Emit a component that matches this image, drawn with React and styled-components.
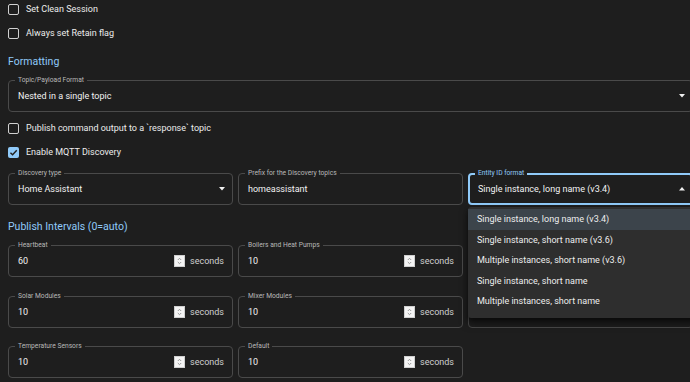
import React from 'react';
import styled, { createGlobalStyle } from 'styled-components';

const Global = createGlobalStyle`
  html, body { margin: 0; padding: 0; background: #1e1e1e; overflow: hidden; }
  body { font-family: Roboto, "Noto Sans", sans-serif; color: #ffffff; }
`;

const Page = styled.div`
  width: 685px;
  padding: 0 8px;
  display: flex;
  flex-direction: column;
`;

const CheckRow = styled.label`
  display: flex;
  align-items: center;
  gap: 7px;
  height: 24px;
  margin-top: ${p => p.$mt || 0}px;
  font-size: 9px;
  color: #ececec;
`;

const Box = styled.span`
  width: 11px;
  height: 11px;
  flex-shrink: 0;
  box-sizing: border-box;
  border-radius: 2px;
  border: ${p => (p.$checked ? 'none' : '1.6px solid #d0d0d0')};
  background: ${p => (p.$checked ? '#90caf9' : 'transparent')};
  display: flex;
  align-items: center;
  justify-content: center;
`;

const Heading = styled.div`
  font-size: 10.5px;
  line-height: 20px;
  color: #90caf9;
  margin-top: ${p => p.$mt || 0}px;
`;

const Field = styled.div`
  position: relative;
  height: 32px;
  box-sizing: border-box;
  border: ${p => (p.$focus ? '2px solid #90caf9' : '1px solid #4a4a4a')};
  border-radius: 4px;
  display: flex;
  align-items: center;
  padding: 0 ${p => (p.$focus ? 6 : 7)}px 0 ${p => (p.$focus ? 8 : 9)}px;
  margin-top: ${p => p.$mt || 0}px;
  font-size: 9px;
  color: #f2f2f2;
`;

const Label = styled.span`
  position: absolute;
  top: ${p => (p.$focus ? -6 : -5)}px;
  left: ${p => (p.$focus ? 5 : 6)}px;
  padding: 0 3px;
  background: #1e1e1e;
  font-size: 6.7px;
  line-height: 9px;
  color: ${p => (p.$focus ? '#90caf9' : '#b8b8b8')};
`;

const Value = styled.span`
  flex: 1;
  white-space: nowrap;
`;

const Unit = styled.span`
  color: #cfcfcf;
  font-size: 9px;
  margin-left: 5px;
  margin-right: 1px;
`;

const Spin = styled.span`
  width: 11px;
  height: 12px;
  flex-shrink: 0;
  background: #f4f4f4;
  border: 1px solid #cfcfcf;
  box-sizing: border-box;
  display: flex;
  align-items: center;
  justify-content: center;
  margin-right: ${p => (p.$alone ? 39 : 0)}px;
`;

const Row = styled.div`
  display: grid;
  grid-template-columns: repeat(3, 225px);
  column-gap: 5px;
  row-gap: 18.5px;
  margin-top: ${p => p.$mt || 0}px;
  position: relative;
`;

const Cell = styled.div`
  position: relative;
`;

const Menu = styled.ul`
  position: absolute;
  top: 34px;
  left: 0;
  width: 240px;
  margin: 0;
  padding: 2px 0 6px;
  list-style: none;
  background: #2e2e2e;
  box-shadow: 0 5px 8px rgba(0, 0, 0, 0.5), 0 2px 4px rgba(0, 0, 0, 0.4);
  border-radius: 3px;
  z-index: 5;
`;

const Item = styled.li`
  height: 20.5px;
  display: flex;
  align-items: center;
  padding-left: 9px;
  font-size: 9px;
  color: #ededed;
  background: ${p => (p.$active ? '#3c444b' : 'transparent')};
`;

const Arrow = ({ up }) => (
  <svg width="6" height="3.5" viewBox="0 0 6 3.5">
    <path d={up ? 'M0 3.5 L3 0 L6 3.5 Z' : 'M0 0 L6 0 L3 3.5 Z'} fill="#f0f0f0" />
  </svg>
);

const Check = ({ checked, children, mt }) => (
  <CheckRow $mt={mt}>
    <Box $checked={checked}>
      {checked && (
        <svg width="9" height="9" viewBox="0 0 10 10">
          <path d="M1.6 5.2 L4 7.5 L8.6 2.6" stroke="#1e1e1e" strokeWidth="1.6" fill="none" />
        </svg>
      )}
    </Box>
    {children}
  </CheckRow>
);

const SpinIcon = ({ alone }) => (
  <Spin $alone={alone}>
    <svg width="5" height="8" viewBox="0 0 5 8">
      <path d="M0.8 3 L2.5 1.3 L4.2 3 M0.8 5 L2.5 6.7 L4.2 5" stroke="#8a8a8a" strokeWidth="0.9" fill="none" />
    </svg>
  </Spin>
);

const NumField = ({ label, value }) => (
  <Field>
    <Label>{label}</Label>
    <Value>{value}</Value>
    <SpinIcon />
    <Unit>seconds</Unit>
  </Field>
);

// third-column fields that sit behind the open menu
const HiddenField = () => (
  <Field>
    <Value />
    <SpinIcon alone />
  </Field>
);

const options = [
  'Single instance, long name (v3.4)',
  'Single instance, short name (v3.6)',
  'Multiple instances, short name (v3.6)',
  'Single instance, short name',
  'Multiple instances, short name',
];

export default function App() {
  return (
    <>
      <Global />
      <Page>
        <Check mt={-3}>Set Clean Session</Check>
        <Check>Always set Retain flag</Check>
        <Heading $mt={7}>Formatting</Heading>
        <Field $mt={8}>
          <Label>Topic/Payload Format</Label>
          <Value>Nested in a single topic</Value>
          <Arrow />
        </Field>
        <Check mt={4}>Publish command output to a `response` topic</Check>
        <Check checked>Enable MQTT Discovery</Check>
        <Row $mt={9}>
          <Field>
            <Label>Discovery type</Label>
            <Value>Home Assistant</Value>
            <Arrow />
          </Field>
          <Field>
            <Label>Prefix for the Discovery topics</Label>
            <Value>homeassistant</Value>
          </Field>
          <Cell>
            <Field $focus>
              <Label $focus>Entity ID format</Label>
              <Value>{options[0]}</Value>
              <Arrow up />
            </Field>
            <Menu>
              {options.map((o, i) => (
                <Item key={o} $active={i === 0}>{o}</Item>
              ))}
            </Menu>
          </Cell>
        </Row>
        <Heading $mt={12}>Publish Intervals (0=auto)</Heading>
        <Row $mt={8}>
          <NumField label="Heartbeat" value="60" />
          <NumField label="Boilers and Heat Pumps" value="10" />
          <HiddenField />
          <NumField label="Solar Modules" value="10" />
          <NumField label="Mixer Modules" value="10" />
          <HiddenField />
          <NumField label="Temperature Sensors" value="10" />
          <NumField label="Default" value="10" />
        </Row>
      </Page>
    </>
  );
}
